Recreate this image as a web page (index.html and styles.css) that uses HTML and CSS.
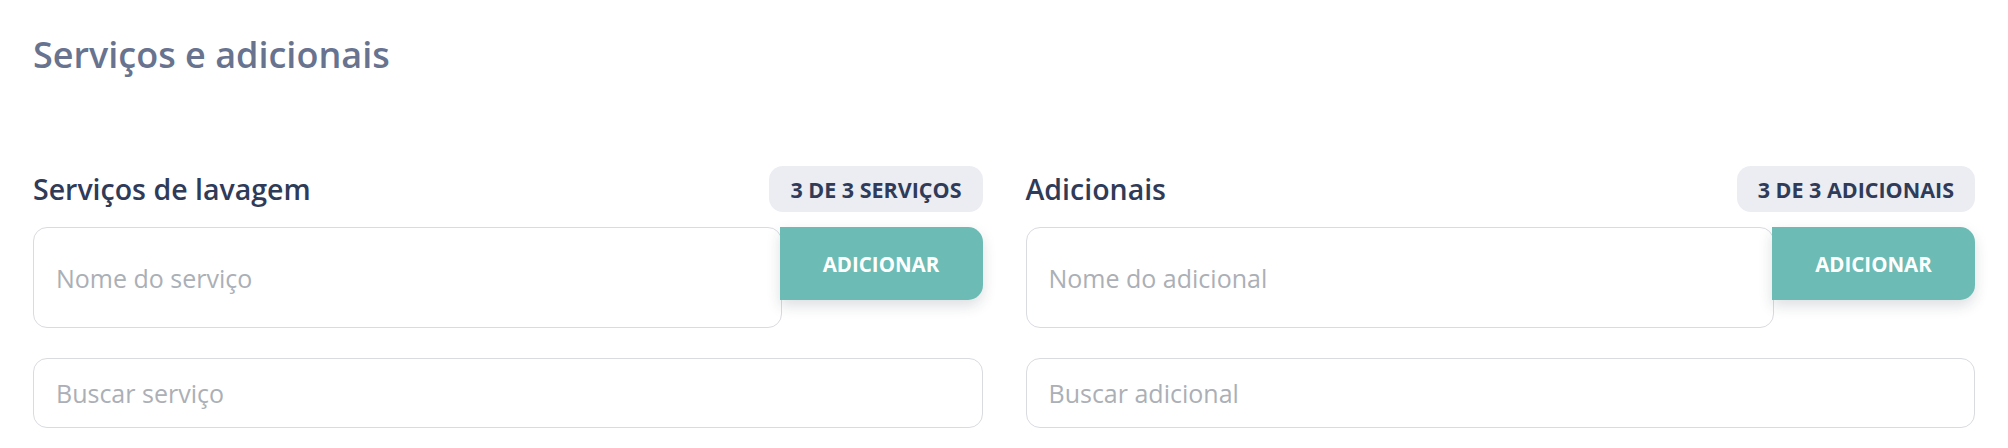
FILE: index.html
```html
<!DOCTYPE html>
<html lang="pt-BR">
<head>
    <meta charset="UTF-8">
    <meta name="viewport" content="width=device-width, initial-scale=1.0">
    <title>Serviços e adicionais</title>
    <link rel="stylesheet" href="styles.css">
</head>
<body>
    <div class="page">
        <h1 class="page-title">Serviços e adicionais</h1>

        <div class="columns">
            <section class="panel">
                <div class="panel-header">
                    <h2>Serviços de lavagem</h2>
                    <span class="count-badge">3 de 3 serviços</span>
                </div>
                <div class="add-row">
                    <input class="field field-name" type="text" placeholder="Nome do serviço">
                    <button class="add-btn">Adicionar</button>
                </div>
                <input class="field field-search" type="text" placeholder="Buscar serviço">
            </section>

            <section class="panel">
                <div class="panel-header">
                    <h2>Adicionais</h2>
                    <span class="count-badge">3 de 3 adicionais</span>
                </div>
                <div class="add-row">
                    <input class="field field-name" type="text" placeholder="Nome do adicional">
                    <button class="add-btn">Adicionar</button>
                </div>
                <input class="field field-search" type="text" placeholder="Buscar adicional">
            </section>
        </div>
    </div>
</body>
</html>
```

FILE: styles.css
```css
* {
    margin: 0;
    padding: 0;
    box-sizing: border-box;
}

body {
    font-family: 'Open Sans', 'Noto Sans', sans-serif;
    background: #ffffff;
    color: #2f3b58;
}

.page {
    padding: 30px 33px 0;
}

.page-title {
    font-size: 36px;
    font-weight: 600;
    color: #687390;
    line-height: 49px;
}

.columns {
    display: grid;
    grid-template-columns: 1fr 1fr;
    gap: 43px;
    margin-top: 87px;
}

.panel-header {
    display: flex;
    align-items: center;
    justify-content: space-between;
    height: 46px;
}

.panel-header h2 {
    font-size: 28.5px;
    font-weight: 600;
    color: #2f3b58;
}

.count-badge {
    display: flex;
    align-items: center;
    height: 46px;
    padding: 0 21px;
    border-radius: 14px;
    background: #ebedf2;
    font-size: 21.5px;
    font-weight: 700;
    text-transform: uppercase;
    color: #2f3b58;
}

.add-row {
    display: flex;
    align-items: flex-start;
    margin-top: 15px;
}

.field {
    display: block;
    width: 100%;
    border: 1px solid #d9dbe0;
    border-radius: 14px;
    padding: 0 22px;
    font-family: inherit;
    font-size: 25px;
    color: #2f3b58;
    background: #fff;
    outline: none;
}

.field::placeholder {
    color: #abafb6;
}

.field-name {
    flex: 1;
    height: 101px;
}

.field-search {
    height: 70px;
    margin-top: 30px;
}

.add-btn {
    position: relative;
    flex: 0 0 203px;
    height: 73px;
    margin-left: -2px;
    border: none;
    border-radius: 0 15px 15px 0;
    background: #6cbbb4;
    color: #fff;
    font-family: inherit;
    font-size: 20.5px;
    font-weight: 700;
    text-transform: uppercase;
    box-shadow: 0 6px 14px rgba(30, 40, 60, 0.15);
    cursor: pointer;
}
```
